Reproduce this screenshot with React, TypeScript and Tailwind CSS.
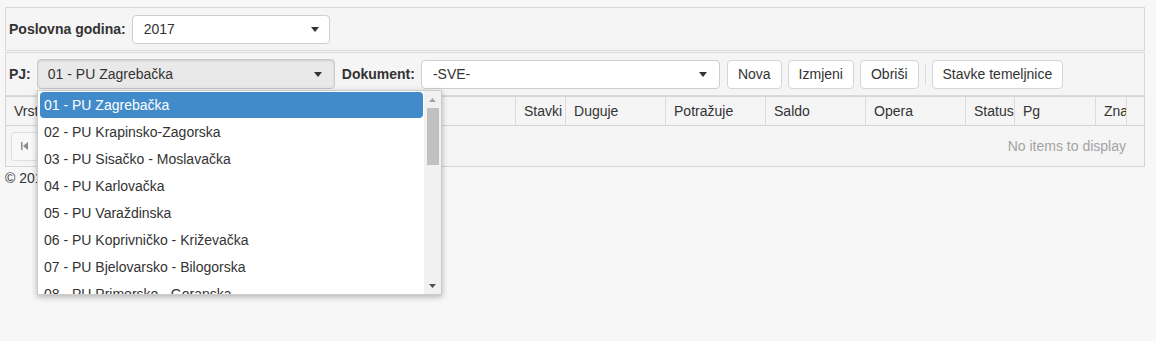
import React from "react";

const Caret = ({ color = "#333" }: { color?: string }) => (
  <svg width="8" height="5" viewBox="0 0 8 5" className="shrink-0">
    <path d="M0 0h8L4 5z" fill={color} />
  </svg>
);

const items = [
  "01 - PU Zagrebačka",
  "02 - PU Krapinsko-Zagorska",
  "03 - PU Sisačko - Moslavačka",
  "04 - PU Karlovačka",
  "05 - PU Varaždinska",
  "06 - PU Koprivničko - Križevačka",
  "07 - PU Bjelovarsko - Bilogorska",
  "08 - PU Primorsko - Goranska",
];

const cols: { label: string; w: string }[] = [
  { label: "Stavki", w: "w-[50px]" },
  { label: "Duguje", w: "w-[100px]" },
  { label: "Potražuje", w: "w-[100px]" },
  { label: "Saldo", w: "w-[100px]" },
  { label: "Opera", w: "w-[100px]" },
  { label: "Status", w: "w-[49px]" },
  { label: "Pg", w: "w-[81px]" },
  { label: "Znal", w: "w-[31px]" },
];

function Btn({ children }: { children: React.ReactNode }) {
  return (
    <button className="h-[29px] px-[10px] bg-white border border-[#d5d5d5] rounded-[4px] text-[14px] text-[#333] leading-none">
      {children}
    </button>
  );
}

export default function App() {
  return (
    <div
      className="relative w-[1156px] h-[341px] bg-[#f7f7f7] overflow-hidden text-[#333] text-[14px]"
      style={{ fontFamily: '"Liberation Sans", Arial, sans-serif' }}
    >
      <div className="pt-[7px] pl-[5px] w-[1145px]">
        {/* Panel 1 */}
        <div className="h-[44px] border border-[#d9d9d9] bg-[#f5f5f5] flex items-center pl-[3px]">
          <span className="font-bold">Poslovna godina:</span>
          <div className="ml-[6px] w-[198px] h-[29px] bg-white border border-[#cfcfcf] rounded-[4px] flex items-center justify-between pl-[11px] pr-[10px]">
            <span>2017</span>
            <Caret />
          </div>
        </div>
        {/* Panel 2 */}
        <div className="mt-[1px] h-[44px] border border-[#d9d9d9] bg-[#f5f5f5] flex items-center pl-[3px]">
          <span className="font-bold">PJ:</span>
          <div className="ml-[6px] w-[298px] h-[30px] bg-[#e9e9e9] border border-[#c9c9c9] rounded-[4px] shadow-[inset_0_1px_2px_rgba(0,0,0,0.12)] flex items-center justify-between pl-[10px] pr-[12px]">
            <span>01 - PU Zagrebačka</span>
            <Caret />
          </div>
          <span className="font-bold ml-[7px]">Dokument:</span>
          <div className="ml-[6px] w-[299px] h-[29px] bg-white border border-[#cfcfcf] rounded-[4px] flex items-center justify-between pl-[11px] pr-[12px]">
            <span>-SVE-</span>
            <Caret />
          </div>
          <div className="ml-[7px] flex items-center gap-[6px]">
            <Btn>Nova</Btn>
            <Btn>Izmjeni</Btn>
            <Btn>Obriši</Btn>
            <div className="w-px h-[22px] bg-[#dcdcdc]" />
            <Btn>Stavke temeljnice</Btn>
          </div>
        </div>
        {/* Grid */}
        <div className="border border-[#d5d5d5] bg-[#f5f5f5]">
          <div className="flex h-[29px] border-b border-[#d5d5d5]">
            <div className="w-[511px] border-r border-[#dcdcdc] flex items-center pl-[8px]">Vrsta</div>
            {cols.map((c) => (
              <div
                key={c.label}
                className={`${c.w} shrink-0 border-r border-[#dcdcdc] flex items-center pl-[8px] overflow-hidden whitespace-nowrap`}
              >
                {c.label}
              </div>
            ))}
            <div className="w-[17px]" />
          </div>
          <div className="h-[40px] flex items-center justify-between pl-[5px] pr-[18px]">
            <div className="w-[27px] h-[29px] border border-[#dedede] bg-[#f8f8f8] rounded-[3px] flex items-center justify-center">
              <svg width="7" height="8" viewBox="0 0 7 8">
                <rect x="0" y="0" width="1.5" height="8" fill="#8a8a8a" />
                <path d="M7 0v8L2 4z" fill="#8a8a8a" />
              </svg>
            </div>
            <span className="text-[#a3a3a3]">No items to display</span>
          </div>
        </div>
        <div className="mt-[1px] leading-[20px]">© 2017</div>
      </div>

      {/* Dropdown overlay */}
      <div className="absolute left-[37px] top-[90px] w-[405px] h-[205px] bg-white border border-[#cccccc] shadow-[0_2px_6px_rgba(0,0,0,0.28)] flex overflow-hidden">
        <div className="flex-1 pl-[2px] pr-[1px] pt-[1px] flex flex-col gap-[1px]">
          {items.map((it, i) => (
            <div
              key={it}
              className={`h-[26px] shrink-0 flex items-center pl-[4px] rounded-[4px] whitespace-nowrap ${
                i === 0 ? "bg-[#428bca] text-white" : "text-[#333]"
              }`}
            >
              {it}
            </div>
          ))}
        </div>
        <div className="w-[17px] bg-[#f1f1f1] flex flex-col items-center">
          <div className="h-[17px] flex items-center justify-center">
            <svg width="7" height="4" viewBox="0 0 7 4">
              <path d="M0 4h7L3.5 0z" fill="#a3a3a3" />
            </svg>
          </div>
          <div className="w-[12px] h-[57px] bg-[#c1c1c1]" />
          <div className="flex-1" />
          <div className="h-[17px] flex items-center justify-center">
            <svg width="7" height="4" viewBox="0 0 7 4">
              <path d="M0 0h7L3.5 4z" fill="#505050" />
            </svg>
          </div>
        </div>
      </div>
    </div>
  );
}
